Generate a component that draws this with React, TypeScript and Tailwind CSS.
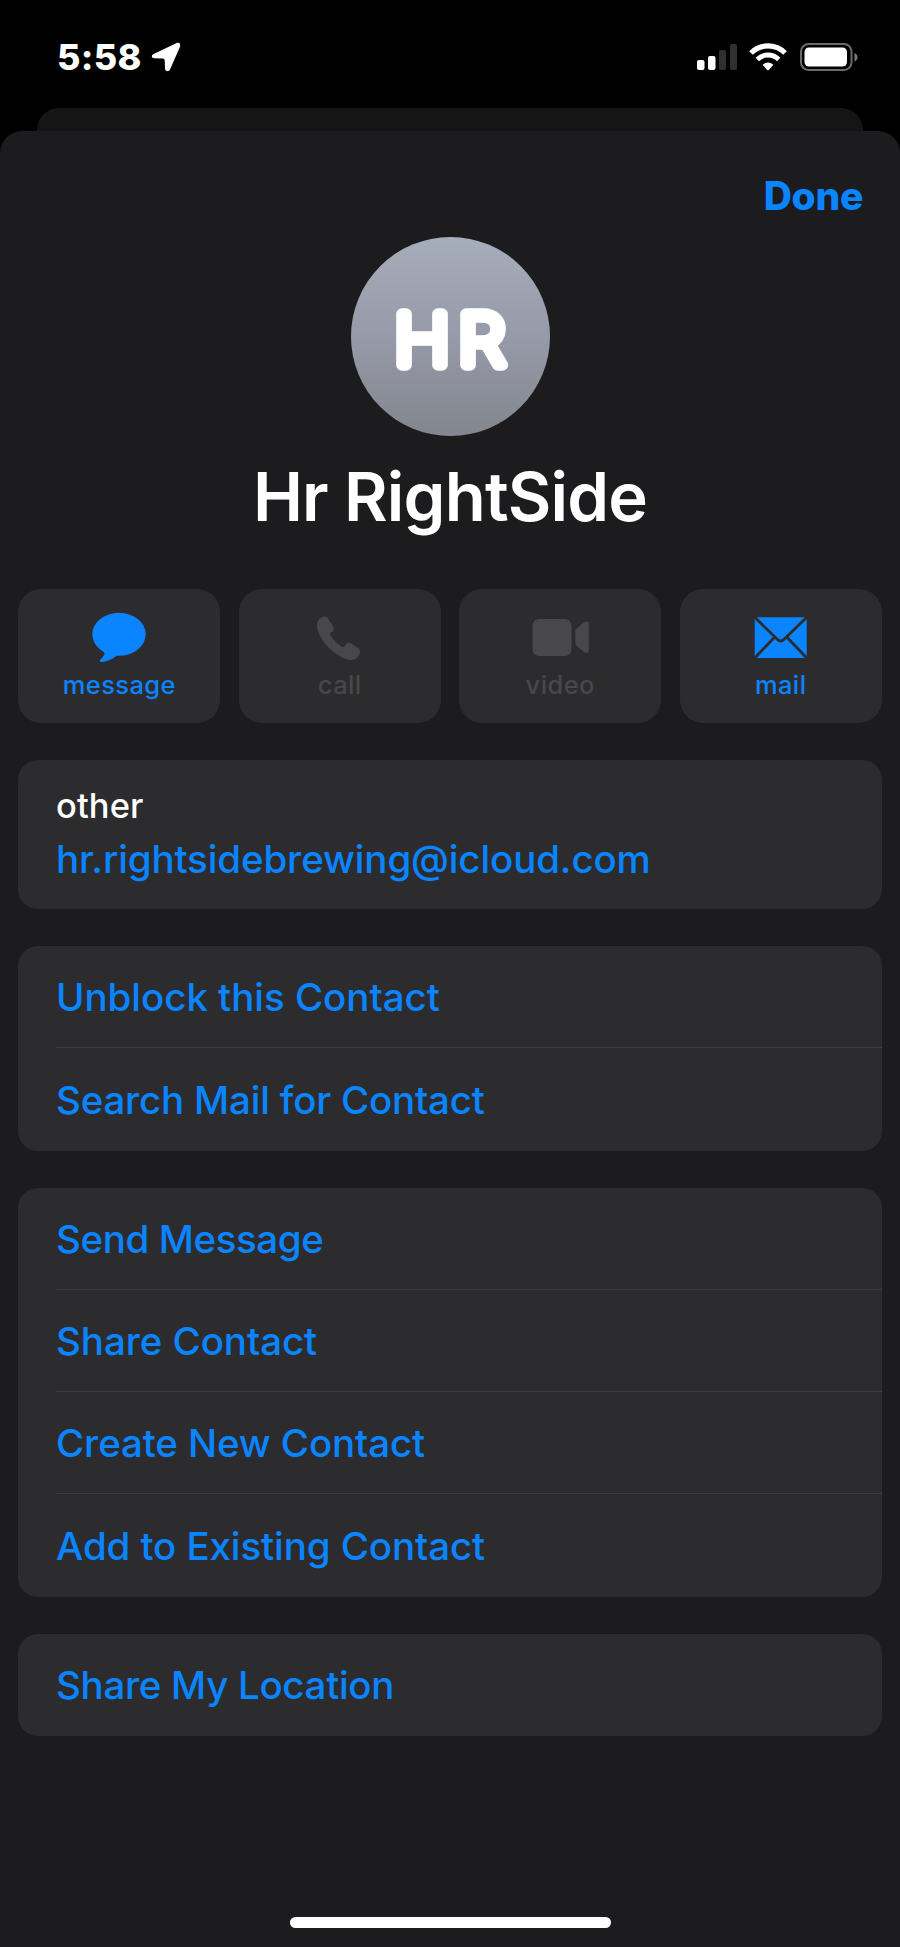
import React from 'react';
import clsx from 'clsx';

interface Action {
  label: string;
  icon: React.ReactNode;
  enabled: boolean;
}

interface Row {
  label: string;
  tracking: string;
}

const actions: Action[] = [
  { label: 'message', icon: <MessageIcon />, enabled: true },
  { label: 'call', icon: <PhoneIcon />, enabled: false },
  { label: 'video', icon: <VideoIcon />, enabled: false },
  { label: 'mail', icon: <MailIcon />, enabled: true },
];

const groups: Row[][] = [
  [
    { label: 'Unblock this Contact', tracking: 'tracking-[-0.04px]' },
    { label: 'Search Mail for Contact', tracking: 'tracking-[-0.2px]' },
  ],
  [
    { label: 'Send Message', tracking: 'tracking-[-0.4px]' },
    { label: 'Share Contact', tracking: 'tracking-[-0.07px]' },
    { label: 'Create New Contact', tracking: 'tracking-[-0.12px]' },
    { label: 'Add to Existing Contact', tracking: 'tracking-[-0.1px]' },
  ],
  [{ label: 'Share My Location', tracking: 'tracking-[-0.31px]' }],
];

export default function App() {
  return (
    <div className="flex h-[1947px] w-[900px] flex-col overflow-hidden bg-black font-['Inter',sans-serif] text-white">
      <StatusBar />

      {/* Edge of the sheet underneath */}
      <div className="mx-[37px] h-[23px] shrink-0 rounded-t-[22px] bg-[#151516]" />

      <main className="flex flex-1 flex-col rounded-t-[22px] bg-[#1c1c1e]">
        <div className="flex justify-end pt-[40px] pr-[37px]">
          <button className="h-[50px] text-[39px] leading-[50px] font-extrabold tracking-[-0.3px] text-[#0a84ff]">
            Done
          </button>
        </div>

        <div className="mt-[16px] flex flex-col items-center">
          <Avatar />
          <h1 className="mt-[21px] h-[80px] text-[67px] leading-[80px] font-semibold tracking-[-0.8px] whitespace-nowrap">
            Hr RightSide
          </h1>
        </div>

        <div className="mt-[51.5px] grid grid-cols-4 gap-[18.5px] px-[18.3px]">
          {actions.map((action) => (
            <button
              key={action.label}
              className={clsx(
                'flex h-[134.5px] flex-col items-center rounded-[23px] bg-[#2c2c2e] pt-[21px]',
                action.enabled ? 'text-[#0a84ff]' : 'text-[#48484a]'
              )}
            >
              {action.icon}
              <span className="mt-[5px] text-[25.5px] leading-[32px] font-medium tracking-[0.4px]">
                {action.label}
              </span>
            </button>
          ))}
        </div>

        <div className="mt-[37px] flex flex-col gap-[37.2px] px-[18.3px]">
          <section className="flex h-[149px] flex-col rounded-[20px] bg-[#2c2c2e] px-[37.7px] pt-[25px]">
            <span className="h-[42px] text-[34.5px] leading-[42px] font-medium tracking-[0.1px]">other</span>
            <a className="mt-[6px] h-[52px] text-[38.5px] leading-[52px] font-medium tracking-[-0.13px] text-[#0a84ff]">
              hr.rightsidebrewing@icloud.com
            </a>
          </section>

          {groups.map((rows) => (
            <section key={rows[0].label} className="rounded-[20px] bg-[#2c2c2e] pl-[37.7px]">
              {rows.map((row, i) => (
                <div
                  key={row.label}
                  className={clsx(
                    'flex h-[102.2px] items-center pt-px',
                    i < rows.length - 1 && 'border-b border-[#3d3d3f]'
                  )}
                >
                  <button className={clsx('text-[38.5px] leading-[52px] font-medium text-[#0a84ff]', row.tracking)}>
                    {row.label}
                  </button>
                </div>
              ))}
            </section>
          ))}
        </div>

        <div className="mx-auto mt-auto mb-[19px] h-[11px] w-[321px] rounded-full bg-white" />
      </main>
    </div>
  );
}

function StatusBar() {
  return (
    <header className="flex h-[108px] shrink-0 items-center justify-between pr-[42px] pl-[57px]">
      <div className="flex items-center pt-[6px]">
        <span className="text-[36px] leading-[44px] font-extrabold tracking-[0.3px]">5:58</span>
        <svg className="ml-[9px]" width="30" height="30" viewBox="0 0 30 30" fill="currentColor">
          <path d="M2.6 12 25.2 1.2C28 0 30 1.900 29 4.700L19 27.500C18 30 14.200 29.600 14 26.500L13.700 18.200Q13.600 16.600 12 16.500L3.200 16.200C.3 16 0 13.200 2.600 12Z" />
        </svg>
      </div>
      <div className="flex items-center pt-[5px]">
        <svg width="40" height="28" viewBox="0 0 40 28" fill="currentColor">
          <rect x="0" y="17" width="7.500" height="10" rx="2" />
          <rect x="11" y="13" width="7.500" height="14" rx="2" />
          <rect x="22" y="7" width="7" height="20" rx="2" fill="#303030" />
          <rect x="33" y="1" width="7" height="26" rx="2" fill="#303030" />
        </svg>
        <svg className="ml-[12px]" width="38" height="28" viewBox="0 0 38 28" fill="none" stroke="currentColor">
          <path d="M2 10C11.500 .6 26.500 .6 36 10" strokeWidth="5.200" />
          <path d="M8.300 16.500C14.300 10.600 23.700 10.600 29.700 16.500" strokeWidth="5" />
          <path d="M13.600 21.700Q19 17.300 24.400 21.700L20 26.700Q19 27.700 18 26.700Z" fill="currentColor" stroke="none" />
        </svg>
        <svg className="ml-[13px]" width="58" height="28" viewBox="0 0 58 28" fill="none">
          <rect x="1" y="1" width="50.500" height="26" rx="7.500" stroke="#6a6a6a" strokeWidth="2" />
          <rect x="4.500" y="4.500" width="42.500" height="19" rx="4.500" fill="currentColor" />
          <path d="M54.500 10C58.500 11.500 58.500 17 54.500 18.500Z" fill="#7a7a7a" />
        </svg>
      </div>
    </header>
  );
}

// Thin letters with a thick round stroke give the rounded monogram
function Avatar() {
  return (
    <div className="h-[199px] w-[199px] rounded-full bg-linear-to-b from-[#a6adbb] via-[#979aa8] to-[#82868e]">
      <svg width="199" height="199" viewBox="0 0 199 199">
        <text
          x="2.200"
          y="0"
          transform="translate(101 128) scale(1.06 1)"
          textAnchor="middle"
          fill="white"
          stroke="white"
          strokeWidth="11.500"
          strokeLinejoin="round"
          className="text-[70.5px] font-extralight tracking-[8.5px]"
        >
          HR
        </text>
      </svg>
    </div>
  );
}

function MessageIcon() {
  return (
    <svg width="60" height="54" viewBox="0 0 60 54" fill="currentColor">
      <ellipse cx="30" cy="24.300" rx="26.700" ry="21.500" />
      <path d="M13 40Q17 43 14.500 46Q13 48 11 50Q10 52 13 52C19 51.500 23 49 28 45.500L24 40Z" />
    </svg>
  );
}

function PhoneIcon() {
  return (
    <svg width="60" height="54" viewBox="0 0 60 54" fill="currentColor">
      <path d="M7 15C7 11 9.500 8.500 12 7.200Q15 5.500 17.500 8L23 16Q24.800 19 22.800 21L20.500 23Q19.500 24.200 20.500 25.800Q25 32.500 31.500 36.700Q33 37.700 34.300 36.300L36 34Q38 31.700 41 33.300L48.500 38.300Q51.300 40.500 49.500 44C48 48 45 50.200 41 50C34 49.700 26 44.500 19 38C12 31 7 22 7 15Z" />
    </svg>
  );
}

function VideoIcon() {
  return (
    <svg width="60" height="54" viewBox="0 0 60 54" fill="currentColor">
      <rect x="2.500" y="9" width="39" height="37" rx="6.500" />
      <path d="M45.300 21.500Q45.300 19.500 46.800 18.200L53.500 12.700Q55 11.700 56.700 11.700Q58.800 11.700 58.800 14V40.300Q58.800 42.700 56.700 42.700Q55 42.700 53.500 41.500L46.800 36Q45.300 34.800 45.300 32.800Z" />
    </svg>
  );
}

function MailIcon() {
  return (
    <svg width="60" height="54" viewBox="0 0 60 54" fill="none">
      <rect x="3.700" y="7.200" width="52" height="40.800" rx="2" fill="currentColor" />
      <path
        d="M3.500 7 26.500 29.500Q29.700 32.700 32.900 29.500L56 7M3.500 48.200 23.300 27.500M56 48.200 36.200 27.500"
        stroke="#2c2c2e"
        strokeWidth="2.800"
      />
    </svg>
  );
}
